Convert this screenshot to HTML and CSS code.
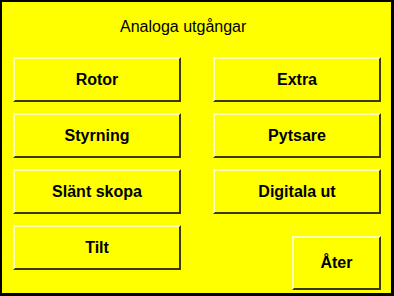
FILE: index.html
```html
<!DOCTYPE html>
<html>
<head>
<meta charset="utf-8">
<link rel="stylesheet" href="styles.css">
</head>
<body>
<div class="frame">
  <div class="title">Analoga utgångar</div>
  <div class="grid">
    <div class="btn">Rotor</div>
    <div class="btn">Extra</div>
    <div class="btn">Styrning</div>
    <div class="btn">Pytsare</div>
    <div class="btn">Slänt skopa</div>
    <div class="btn">Digitala ut</div>
    <div class="btn">Tilt</div>
    <div class="btn back">Åter</div>
  </div>
</div>
</body>
</html>
```
FILE: styles.css
```css
html, body {
  margin: 0;
  padding: 0;
  background: #000;
  width: 394px;
  height: 296px;
  overflow: hidden;
}
.frame {
  margin: 2px 0 0 2px;
  width: 389px;
  height: 291px;
  background: #ffff00;
  box-sizing: border-box;
  padding: 0 10px 0 11px;
  font-family: "Liberation Sans", Arial, sans-serif;
  color: #000;
}
.title {
  padding-top: 15px;
  margin-left: 107px;
  font-size: 16px;
  line-height: 19px;
  height: 19px;
}
.grid {
  margin-top: 21px;
  display: grid;
  grid-template-columns: 168px 168px;
  column-gap: 32px;
  grid-template-rows: 45px 45px 45px 45px;
  row-gap: 11px;
}
.btn {
  box-sizing: border-box;
  border-style: solid;
  border-width: 2px;
  border-color: #ffffb8 #3a3a00 #3a3a00 #ffffb8;
  display: flex;
  align-items: center;
  justify-content: center;
  font-weight: bold;
  font-size: 16px;
}
.back {
  justify-self: end;
  width: 89px;
  height: 54px;
  margin-top: 11px;
}
```
